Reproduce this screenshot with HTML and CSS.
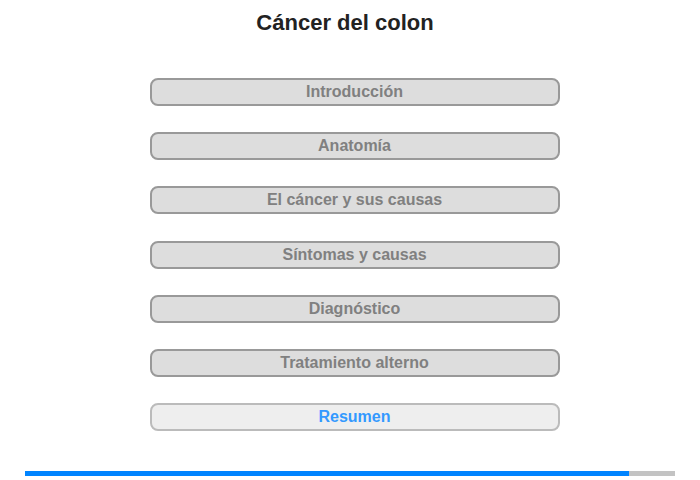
FILE: index.html
```html
<!DOCTYPE html>
<html>

<head>
    <meta charset="utf-8">
    <title>Cáncer del colon</title>

    <link rel="stylesheet" href="styles.css">
</head>

<body>

    <h1 class="title">Cáncer del colon</h1>

    <div class="menu">
        <div class="menu-item">Introducción</div>
        <div class="menu-item">Anatomía</div>
        <div class="menu-item">El cáncer y sus causas</div>
        <div class="menu-item">Síntomas y causas</div>
        <div class="menu-item">Diagnóstico</div>
        <div class="menu-item">Tratamiento alterno</div>
        <div class="menu-item active">Resumen</div>
    </div>

    <div class="progress">
        <div class="progress-done" style="width: 92.9%"></div>
    </div>

</body>

</html>
```

FILE: styles.css
```css
body {
    margin: 0;
    font-family: "Liberation Sans", Arial, sans-serif;
    background: #fff;
}

.title {
    margin: 0;
    padding: 10px 10px 0 0;
    font-size: 22px;
    line-height: 25px;
    font-weight: bold;
    color: #222;
    text-align: center;
}

.menu {
    display: flex;
    flex-direction: column;
    align-items: center;
    gap: 26.2px;
    padding-left: 9px;
    margin-top: 43px;
}

.menu-item {
    box-sizing: border-box;
    width: 410px;
    height: 28px;
    line-height: 24px;
    border: 2px solid #999;
    border-radius: 8px;
    background: #ddd;
    color: #808080;
    font-size: 16px;
    font-weight: bold;
    text-align: center;
}

.menu-item.active {
    background: #eee;
    border-color: #bbb;
    color: #3399ff;
}

.progress {
    width: 650px;
    height: 5px;
    margin: 40px 0 0 25px;
    background: #c3c3c3;
}

.progress-done {
    height: 100%;
    background: #0084ff;
}
```
